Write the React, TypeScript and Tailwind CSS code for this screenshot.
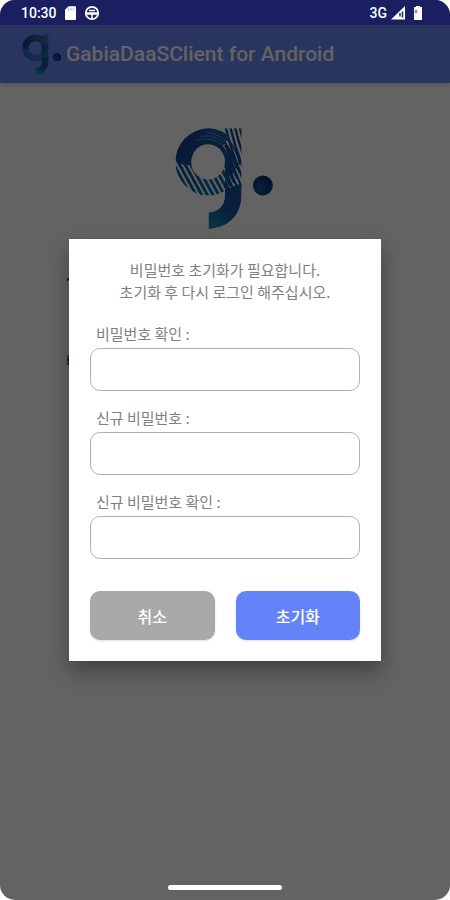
import { useId } from "react";

const ringStripes = Array.from({ length: 14 }, (_, i) => 14 + i * 17);
const stemStripes = Array.from({ length: 10 }, (_, i) => 130 + i * 14);

function Logo({ className }: { className: string }) {
  const id = useId();
  return (
    <svg viewBox="48 36 300 310" className={className} role="img" aria-label="Gabia">
      <defs>
        <linearGradient id={`${id}ring`} gradientUnits="userSpaceOnUse" x1="60" y1="90" x2="220" y2="60">
          <stop offset="0" stopColor="#123f8c" />
          <stop offset="0.5" stopColor="#174c94" />
          <stop offset="1" stopColor="#14699f" />
        </linearGradient>
        <linearGradient id={`${id}stripe`} gradientUnits="userSpaceOnUse" x1="60" y1="100" x2="150" y2="240">
          <stop offset="0" stopColor="#14468f" />
          <stop offset="1" stopColor="#0f6a9c" />
        </linearGradient>
        <linearGradient id={`${id}tail`} gradientUnits="userSpaceOnUse" x1="245" y1="190" x2="150" y2="335">
          <stop offset="0" stopColor="#155a9d" />
          <stop offset="0.55" stopColor="#164c96" />
          <stop offset="1" stopColor="#0f8fae" />
        </linearGradient>
        <radialGradient id={`${id}dot`} cx="0.35" cy="0.65" r="0.8">
          <stop offset="0" stopColor="#164fa0" />
          <stop offset="1" stopColor="#0b2767" />
        </radialGradient>
        <clipPath id={`${id}bowl`}>
          <path clipRule="evenodd" d="M148 40a99 101 0 1 0 0 202a99 101 0 1 0 0-202ZM147 88a51 53 0 1 1 0 106a51 53 0 1 1 0-106Z" />
        </clipPath>
        <clipPath id={`${id}stem`}>
          <path d="M198 40H248V240C248 305 205 340 148 343V293C178 292 198 275 198 238Z" />
        </clipPath>
      </defs>
      <g clipPath={`url(#${id}bowl)`}>
        <path d="M46 130C46 80 90 36 150 36C175 38 195 46 205 60L190 100L150 100L120 125L96 150L72 150Z" fill={`url(#${id}ring)`} />
        <g stroke={`url(#${id}stripe)`} strokeWidth="9">
          {ringStripes.map((x) => (
            <line key={x} x1={x - 36} y1="90" x2={x + 62} y2="270" />
          ))}
        </g>
        <g stroke="#14559a" strokeWidth="6" fill="none">
          <path d="M148 48Q225 58 243 150M148 60Q212 66 232 160M148 72Q204 78 220 175M148 84Q194 88 207 185" />
        </g>
        <g stroke="#fff" strokeWidth="2" opacity="0.45" fill="none">
          <path d="M108 78Q165 54 212 112M124 64Q176 54 222 104M142 52Q190 54 234 108" />
        </g>
      </g>
      <g clipPath={`url(#${id}stem)`}>
        <path d="M248 205V240C248 305 205 340 148 343V293C178 292 198 275 198 238V225Z" fill={`url(#${id}tail)`} />
        <g stroke="#124a90" strokeWidth="7" fill="none">
          {stemStripes.map((x) => (
            <path key={x} d={`M${x} 36Q${x + 22} 130 ${x + 72} 240`} />
          ))}
        </g>
        <g stroke="#159bb0" strokeWidth="3" opacity="0.35" fill="none">
          <path d="M148 300C185 294 207 280 216 225M148 313C197 303 225 284 231 213M148 328C208 313 239 284 243 202" />
        </g>
      </g>
      <circle cx="312" cy="212" r="30" fill={`url(#${id}dot)`} />
    </svg>
  );
}

function StatusBar() {
  return (
    <div className="relative z-20 flex h-[25px] shrink-0 items-center justify-between bg-[#1a1f62] pr-7 pl-[21px] font-[Roboto,'Noto_Sans',sans-serif] text-sm font-medium text-white">
      <div className="flex items-center gap-2">
        <span>10:30</span>
        <svg viewBox="0 0 12 15" className="h-3.5 w-[11px]" aria-hidden="true">
          <path d="M4 0h7q1 0 1 1v13q0 1-1 1H1q-1 0-1-1V4Z" fill="#fff" />
          <path d="M4 2v3M6.500 2v3M9 2v3" stroke="#aaa" strokeWidth="1" />
        </svg>
        <svg viewBox="0 0 16 16" className="size-4" fill="none" stroke="#fff" aria-hidden="true">
          <circle cx="8" cy="8" r="6.200" strokeWidth="1.800" />
          <path d="M1.500 8.500h13" strokeWidth="2.500" />
          <path d="M5 5.500h6M8 9v5" strokeWidth="1.500" />
        </svg>
      </div>
      <div className="flex items-center gap-1">
        <span>3G</span>
        <svg viewBox="0 0 15 14" className="h-3.5 w-[15px]" aria-hidden="true">
          <path d="M0 13.500 14 0v13.500Z" fill="#fff" />
          <path d="M9 7v3.500M11.500 5.500v6" stroke="#1a1f62" strokeWidth="1.500" />
        </svg>
        <svg viewBox="0 0 8 14" className="ml-1 h-3.5 w-2" aria-hidden="true">
          <path d="M0 1h2V0h4v1h2v13H0Z" fill="#fff" />
          <path d="M1 4h2v3H1ZM1 10h1" fill="#8b8eb3" stroke="#8b8eb3" strokeWidth="0.500" />
        </svg>
      </div>
    </div>
  );
}

function PasswordField({ id, label }: { id: string; label: string }) {
  return (
    <div className="flex flex-col gap-1">
      <label htmlFor={id} className="px-1.5 text-[15px] leading-5">
        {label}
      </label>
      <input id={id} type="password" className="h-[43px] w-full rounded-[10px] border border-[#b0b0b0] bg-white px-3 outline-none" />
    </div>
  );
}

export default function App() {
  return (
    <div className="relative flex min-h-screen flex-col overflow-hidden rounded-[15px] bg-white font-['Noto_Sans_CJK_KR',sans-serif]">
      <StatusBar />
      <header className="flex h-[58px] shrink-0 items-center gap-1 bg-[#6986f5] px-[22px] shadow-md">
        <Logo className="h-[41px] w-10" />
        <h1 className="pt-0.5 font-[Roboto,'Noto_Sans',sans-serif] text-[21px] font-medium whitespace-nowrap text-white">
          GabiaDaaSClient for Android
        </h1>
      </header>
      <main className="flex flex-1 flex-col items-center pt-11">
        <Logo className="h-[103px] w-[100px]" />
        <div className="flex w-full flex-col gap-16 px-[66px] pt-9 text-sm text-black">
          <span>사용자</span>
          <span>비밀번호</span>
        </div>
      </main>

      <div className="absolute inset-0 z-10 flex items-center justify-center bg-black/61">
        <form
          role="dialog"
          aria-modal="true"
          aria-describedby="reset-message"
          onSubmit={(event) => event.preventDefault()}
          className="flex w-[312px] max-w-full flex-col bg-white px-[21px] pt-5 pb-[21px] text-[#808080] shadow-[0_10px_20px_rgba(0,0,0,0.35)]"
        >
          <p id="reset-message" className="text-center text-[15px] leading-[22px]">
            비밀번호 초기화가 필요합니다.
            <br />
            초기화 후 다시 로그인 해주십시오.
          </p>
          <div className="mt-[21px] flex flex-col gap-[17px]">
            <PasswordField id="current-password" label="비밀번호 확인 :" />
            <PasswordField id="new-password" label="신규 비밀번호 :" />
            <PasswordField id="confirm-password" label="신규 비밀번호 확인 :" />
          </div>
          <div className="mt-8 grid grid-cols-2 gap-[21px] text-base font-medium text-white">
            <button type="button" className="h-[49px] rounded-[10px] bg-[#a9a9a9] shadow-sm">
              취소
            </button>
            <button type="submit" className="h-[49px] rounded-[10px] bg-[#6583f8] shadow-sm">
              초기화
            </button>
          </div>
        </form>
      </div>

      <div className="absolute bottom-[10px] left-1/2 z-20 h-[5px] w-[114px] -translate-x-1/2 rounded-full bg-white" />
    </div>
  );
}
